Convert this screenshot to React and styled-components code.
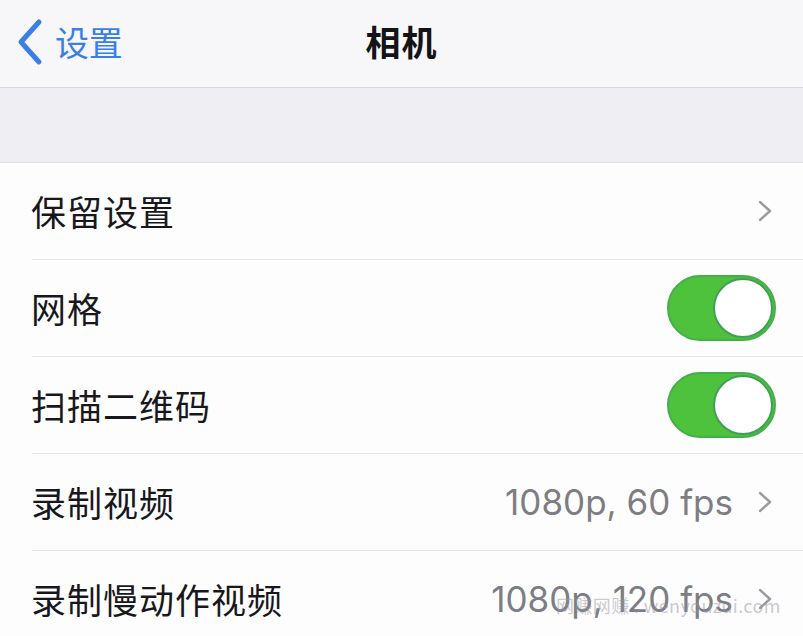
import React from "react";
import styled, { createGlobalStyle } from "styled-components";

const GlobalStyle = createGlobalStyle`
  html, body {
    margin: 0;
    padding: 0;
    background: #fdfdfe;
    overflow: hidden;
  }
  body {
    font-family: "Noto Sans CJK SC", "Noto Sans", sans-serif;
    -webkit-font-smoothing: antialiased;
  }
`;

const Screen = styled.div`
  position: relative;
  width: 803px;
  height: 636px;
  overflow: hidden;
  background: #fdfdfe;
`;

const NavBar = styled.header`
  position: relative;
  height: 87px;
  display: flex;
  align-items: center;
  justify-content: center;
  background: #f7f7f9;
  border-bottom: 1px solid #d8d8dc;
`;

const BackButton = styled.div`
  position: absolute;
  left: 16px;
  top: 0;
  bottom: 4px;
  display: flex;
  align-items: center;
  gap: 11px;
  color: #3a7fe8;
  font-size: 34px;
  letter-spacing: -0.3px;
`;

const Title = styled.h1`
  margin: 0 0 6px;
  font-size: 35px;
  font-weight: 700;
  color: #141416;
  letter-spacing: 1px;
`;

const GroupGap = styled.div`
  height: 74px;
  background: #efeff3;
  border-bottom: 1px solid #dedee2;
`;

const List = styled.ul`
  list-style: none;
  margin: 0;
  padding: 0 0 0 32px;
  background: #fdfdfe;
`;

const Row = styled.li`
  height: 96px;
  display: flex;
  align-items: center;
  padding-right: ${(p) => (p.$toggle ? "27px" : "31px")};
  border-bottom: 1px solid #e6e6ea;
`;

const Label = styled.span`
  flex: 1;
  font-size: 35px;
  color: #18181c;
  letter-spacing: 1px;
  margin-left: -1px;
  margin-top: -2px;
`;

const Value = styled.span`
  font-family: "Inter", "Noto Sans", sans-serif;
  font-size: 35px;
  color: #7d7d84;
  margin-right: 25px;
`;

const Switch = styled.div`
  position: relative;
  width: 109px;
  height: 66px;
  box-sizing: border-box;
  border-radius: 33px;
  background: #4fc23d;
  border: 2px solid #43ae4a;
`;

const Knob = styled.div`
  position: absolute;
  right: 1px;
  top: 1px;
  width: 60px;
  height: 60px;
  box-sizing: border-box;
  border-radius: 50%;
  background: #ffffff;
  border: 2px solid #3f9f55;
`;

const Watermark = styled.div`
  position: absolute;
  left: 556px;
  top: 592px;
  font-family: "Noto Sans CJK SC", "Noto Sans", sans-serif;
  font-size: 18px;
  letter-spacing: 0.4px;
  color: rgba(150, 150, 160, 0.5);
  white-space: nowrap;
`;

const BackChevron = () => (
  <svg width="28" height="48" viewBox="0 0 28 48">
    <path
      d="M23 4 L5 24 L23 44"
      fill="none"
      stroke="#3a7fe8"
      strokeWidth="5"
      strokeLinecap="round"
      strokeLinejoin="round"
    />
  </svg>
);

const Chevron = () => (
  <svg width="14" height="22" viewBox="0 0 14 22">
    <path
      d="M2 2 L12 11 L2 20"
      fill="none"
      stroke="#9a9aa0"
      strokeWidth="2.4"
      strokeLinecap="round"
      strokeLinejoin="round"
    />
  </svg>
);

const Toggle = () => (
  <Switch>
    <Knob />
  </Switch>
);

const rows = [
  { label: "保留设置", kind: "link" },
  { label: "网格", kind: "toggle" },
  { label: "扫描二维码", kind: "toggle" },
  { label: "录制视频", kind: "link", value: "1080p, 60 fps" },
  { label: "录制慢动作视频", kind: "link", value: "1080p, 120 fps" },
];

export default function App() {
  return (
    <>
      <GlobalStyle />
      <Screen>
        <NavBar>
          <BackButton>
            <BackChevron />
            <span>设置</span>
          </BackButton>
          <Title>相机</Title>
        </NavBar>
        <GroupGap />
        <List>
          {rows.map((r) => (
            <Row key={r.label} $toggle={r.kind === "toggle"}>
              <Label>{r.label}</Label>
              {r.value && <Value>{r.value}</Value>}
              {r.kind === "toggle" ? <Toggle /> : <Chevron />}
            </Row>
          ))}
        </List>
        <Watermark>网赚网赚 . wenyouzui.com</Watermark>
      </Screen>
    </>
  );
}
